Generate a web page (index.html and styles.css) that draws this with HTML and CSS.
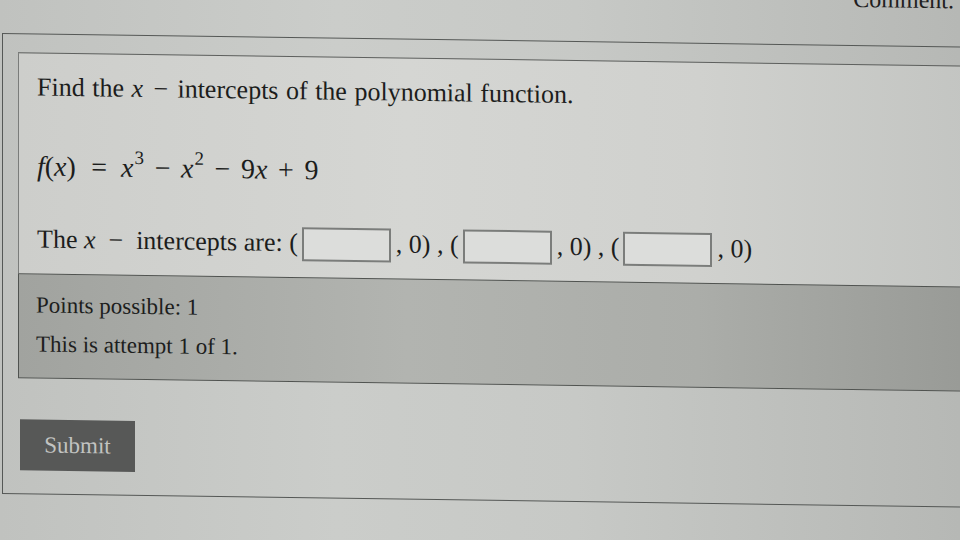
FILE: index.html
```html
<!DOCTYPE html>
<html lang="en">
<head>
<meta charset="utf-8">
<title>Polynomial intercepts</title>
<link rel="stylesheet" href="styles.css">
</head>
<body>
<div class="page">
  <div class="topbar"><span class="topnote">Comment.</span></div>
  <div class="outer">
    <div class="inner">
      <p class="q">Find the <i class="mv">x</i><span class="bin">−</span>intercepts of the polynomial function.</p>
      <p class="formula"><i class="mv">f</i>(<i class="mv">x</i>)<span class="rel">=</span><i class="mv">x</i><sup>3</sup><span class="bin">−</span><i class="mv">x</i><sup>2</sup><span class="bin">−</span>9<i class="mv">x</i><span class="bin">+</span>9</p>
      <p class="answer">The <i class="mv">x</i><span class="bin">−</span>intercepts are: (<span class="box"></span>, 0) , (<span class="box"></span>, 0) , (<span class="box"></span>, 0)</p>
    </div>
    <div class="info">
      <p class="line">Points possible: 1</p>
      <p class="line second">This is attempt 1 of 1.</p>
    </div>
    <div class="actions"><button class="submit" type="button">Submit</button></div>
  </div>
</div>
</body>
</html>
```
FILE: styles.css
```css
html, body {
  margin: 0;
  padding: 0;
  width: 960px;
  height: 540px;
  overflow: hidden;
}
body {
  background: linear-gradient(to right, #c0c2bf 0%, #cbcdca 35%, #c7c9c6 60%, #b6b8b5 100%);
  font-family: "Liberation Serif", "Times New Roman", serif;
  color: #1c1d1c;
}
.page {
  width: 990px;
  transform: skewY(0.8deg);
  transform-origin: 0 0;
}
.topbar {
  height: 33px;
  display: flex;
  justify-content: flex-end;
  padding-right: 36px;
}
.topnote {
  font-size: 24px;
  line-height: 24px;
  margin-top: -25px;
  color: #202020;
}
.outer {
  margin-left: 2px;
  border-top: 1px solid #555856;
  border-left: 1px solid #555856;
  border-bottom: 1px solid #555856;
  padding: 18px 0 23px 15px;
}
.inner {
  border-top: 1px solid #5e605e;
  border-left: 1px solid #7a7c7a;
  background: linear-gradient(to right, #cdcecb 0%, #d5d6d3 40%, #d0d1ce 70%, #c2c4c1 100%);
  padding: 20px 0 16px 18px;
}
.inner p {
  margin: 0;
  font-size: 26px;
  line-height: 28px;
  white-space: nowrap;
}
.mv {
  font-style: italic;
}
.bin {
  margin: 0 0.3em;
}
.q .bin {
  margin: 0 0.36em 0 0.4em;
}
.q {
  word-spacing: 1px;
}
.formula {
  margin-top: 51px !important;
  font-size: 28px !important;
}
.formula .rel {
  margin: 0 0.5em 0 0.55em;
}
.formula .bin {
  margin: 0 0.38em;
}
.formula sup {
  font-size: 19px;
  line-height: 0;
  vertical-align: 13px;
  margin-left: 1px;
}
.answer {
  margin-top: 43px !important;
}
.answer .bin {
  margin: 0 0.5em;
}
.box {
  display: inline-block;
  width: 85px;
  height: 30px;
  border: 2px solid #7b7d7b;
  background: #dcdddb;
  vertical-align: -10px;
  margin: 0 5px 0 4px;
}
.info {
  border: 1px solid #505350;
  background: linear-gradient(to right, #a1a39f 0%, #b2b4b0 40%, #abada9 70%, #979995 100%);
  padding: 17px 0 19px 17px;
}
.info .line {
  margin: 0;
  font-size: 23px;
  line-height: 28px;
  color: #1d1e1d;
}
.info .second {
  margin-top: 11px;
}
.actions {
  padding-top: 41px;
  padding-left: 2px;
}
.submit {
  width: 115px;
  height: 51px;
  border: none;
  background: #575857;
  color: #c2c3c1;
  font-family: "Liberation Serif", "Times New Roman", serif;
  font-size: 23px;
  padding: 0;
  display: block;
}
```
